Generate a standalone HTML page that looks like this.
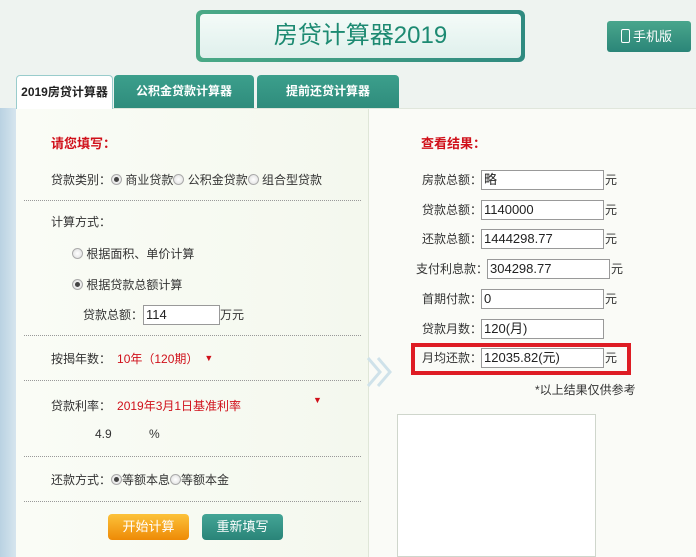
<!DOCTYPE html>
<html><head><meta charset="utf-8"><style>
*{margin:0;padding:0;box-sizing:border-box}
body{width:696px;height:557px;overflow:hidden;background:#eef3f0;font-family:"Liberation Sans","Noto Sans CJK SC",sans-serif;font-size:12px;color:#333;position:relative}
.a{position:absolute;white-space:nowrap}
.red{color:#d0101a}
.dot{position:absolute;left:24px;width:337px;border-top:1px dotted #999;height:0}
.inp{position:absolute;height:20px;border:1px solid #999;background:#fff;font-size:13px;line-height:18px;padding:0 2px;color:#222}
.rad{display:inline-block;width:11px;height:11px;border-radius:50%;border:1px solid #aaa;background:radial-gradient(#fff,#ddd);vertical-align:-1px;position:relative}
.rad.on::after{content:"";position:absolute;left:2px;top:2px;width:5px;height:5px;border-radius:50%;background:#444}
.r .a{line-height:20px}
</style></head><body>
<div class="a" style="left:0;top:108px;width:16px;height:449px;background:linear-gradient(90deg,#b9d2e2,#d6e5ee)"></div>
<div class="a" style="left:16px;top:108px;width:352px;height:449px;background:linear-gradient(90deg,#fafcf6,#f4f8ee)"></div>
<div class="a" style="left:368px;top:108px;width:1px;height:449px;background:#dfe6d8"></div>
<div class="a" style="left:369px;top:108px;width:327px;height:449px;background:#fafbf7"></div>
<div class="a" style="left:16px;top:108px;width:680px;height:1px;background:#e0e6dc"></div>

<div class="a" style="left:196px;top:10px;width:329px;height:52px;border-radius:6px;background:linear-gradient(90deg,#4aa986,#2f8a80);padding:4px"><div style="width:100%;height:100%;border-radius:4px;background:linear-gradient(180deg,#f4fbf8,#dff0ec);text-align:center;font-size:24px;line-height:44px;color:#1d8a72">房贷计算器2019</div></div>
<div class="a" style="left:607px;top:21px;width:84px;height:31px;border-radius:3px;background:linear-gradient(#49a68c,#2b8578);color:#fff;font-size:13px;line-height:31px;padding-left:14px"><span style="display:inline-block;width:9px;height:14px;border:1.5px solid #fff;border-radius:2px;vertical-align:-2px;margin-right:3px"></span>手机版</div>

<div class="a" style="left:16px;top:75px;width:97px;height:34px;background:#fff;border:1px solid #9cc;border-bottom:none;border-radius:4px 4px 0 0;font-size:12px;font-weight:bold;line-height:32px;text-align:center;color:#222">2019房贷计算器</div>
<div class="a" style="left:114px;top:75px;width:140px;height:33px;background:linear-gradient(#3c9f8c,#2f8c7c);border-radius:4px 4px 0 0;color:#fff;font-weight:bold;line-height:33px;text-align:center">公积金贷款计算器</div>
<div class="a" style="left:257px;top:75px;width:142px;height:33px;background:linear-gradient(#3c9f8c,#2f8c7c);border-radius:4px 4px 0 0;color:#fff;font-weight:bold;line-height:33px;text-align:center">提前还贷计算器</div>

<div class="a red" style="left:51px;top:133px;font-weight:bold;font-size:13px">请您填写：</div>
<div class="a" style="left:51px;top:171px">贷款类别：<span class="rad on"></span> 商业贷款<span class="rad"></span> 公积金贷款<span class="rad"></span> 组合型贷款</div>
<div class="dot" style="top:200px"></div>
<div class="a" style="left:51px;top:213px">计算方式：</div>
<div class="a" style="left:72px;top:245px"><span class="rad"></span> 根据面积、单价计算</div>
<div class="a" style="left:72px;top:276px"><span class="rad on"></span> 根据贷款总额计算</div>
<div class="a" style="left:83px;top:305px;line-height:20px">贷款总额：</div>
<div class="inp" style="left:143px;top:305px;width:77px">114</div>
<div class="a" style="left:220px;top:305px;line-height:20px">万元</div>
<div class="dot" style="top:335px"></div>
<div class="a" style="left:51px;top:350px">按揭年数：<span class="red" style="margin-left:6px">10年（120期）</span><span class="red" style="font-size:9px;margin-left:6px;vertical-align:2px">▼</span></div>
<div class="dot" style="top:380px"></div>
<div class="a" style="left:51px;top:397px">贷款利率：<span class="red" style="margin-left:6px">2019年3月1日基准利率</span></div>
<div class="a red" style="left:313px;top:395px;font-size:9px">▼</div>
<div class="a" style="left:95px;top:427px">4.9</div>
<div class="a" style="left:149px;top:427px">%</div>
<div class="dot" style="top:456px"></div>
<div class="a" style="left:51px;top:471px">还款方式：<span class="rad on"></span>等额本息<span class="rad"></span>等额本金</div>
<div class="dot" style="top:501px"></div>
<div class="a" style="left:108px;top:514px;width:81px;height:26px;border-radius:4px;background:linear-gradient(#fcc23a,#ee8a06);color:#fff;text-align:center;line-height:26px;font-size:13px">开始计算</div>
<div class="a" style="left:202px;top:514px;width:81px;height:26px;border-radius:4px;background:linear-gradient(#44a596,#2a8478);color:#fff;text-align:center;line-height:26px;font-size:13px">重新填写</div>

<div class="a red" style="left:421px;top:133px;font-weight:bold;font-size:13px">查看结果：</div>
<div class="r">
<div class="a" style="left:422px;top:170px">房款总额：</div><div class="inp" style="left:481px;top:170px;width:123px">略</div><div class="a" style="left:605px;top:170px">元</div>
<div class="a" style="left:422px;top:200px">贷款总额：</div><div class="inp" style="left:481px;top:200px;width:123px">1140000</div><div class="a" style="left:605px;top:200px">元</div>
<div class="a" style="left:422px;top:229px">还款总额：</div><div class="inp" style="left:481px;top:229px;width:123px">1444298.77</div><div class="a" style="left:605px;top:229px">元</div>
<div class="a" style="left:416px;top:259px">支付利息款：</div><div class="inp" style="left:487px;top:259px;width:123px">304298.77</div><div class="a" style="left:611px;top:259px">元</div>
<div class="a" style="left:422px;top:289px">首期付款：</div><div class="inp" style="left:481px;top:289px;width:123px">0</div><div class="a" style="left:605px;top:289px">元</div>
<div class="a" style="left:422px;top:319px">贷款月数：</div><div class="inp" style="left:481px;top:319px;width:123px">120(月)</div>
<div class="a" style="left:411px;top:343px;width:220px;height:32px;border:4px solid #de1c24"></div>
<div class="a" style="left:422px;top:348px">月均还款：</div><div class="inp" style="left:481px;top:348px;width:123px">12035.82(元)</div><div class="a" style="left:605px;top:348px">元</div>
</div>
<div class="a" style="left:535px;top:381px">*以上结果仅供参考</div>
<svg class="a" style="left:366px;top:356px" width="30" height="32"><path d="M2 2 L14 16 L2 30 M12 2 L24 16 L12 30" fill="none" stroke="#cfe2ea" stroke-width="3"/></svg>
<div class="a" style="left:397px;top:414px;width:199px;height:143px;background:#fff;border:1px solid #cfd6cc"></div>
</body></html>
